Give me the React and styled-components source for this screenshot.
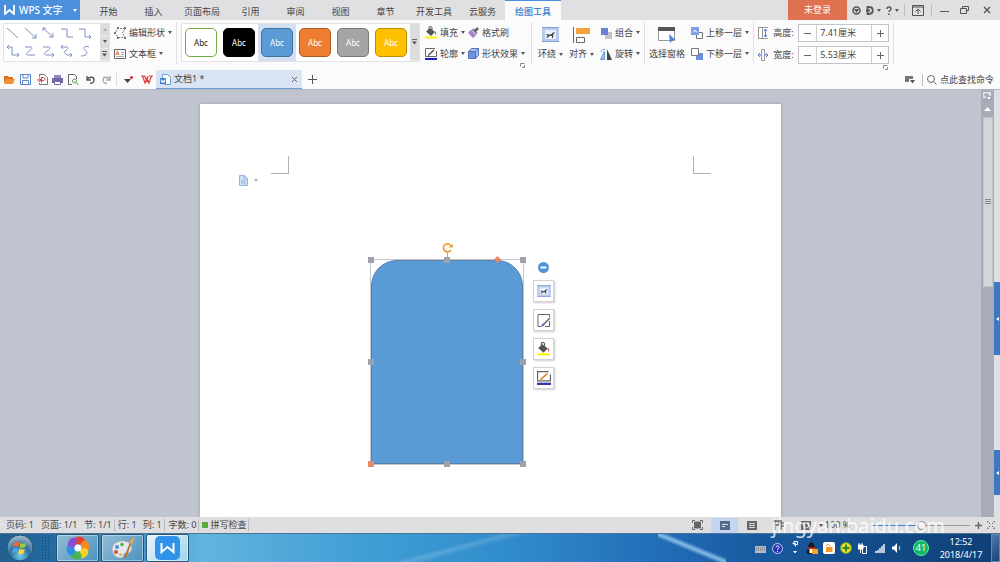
import React, { useState } from 'react'
import styled, { createGlobalStyle } from 'styled-components'

const GlobalStyle = createGlobalStyle`
  *{
    box-sizing: border-box;
  }

  body{
    margin: 0;
    overflow: hidden;
    font-family: "Noto Sans", "Noto Sans CJK SC", sans-serif;
    font-size: 9px;
    line-height: 14px;
    color: #444;
  }

  button, input{
    margin: 0;
    padding: 0;
    border: 0;
    background: none;
    font: inherit;
    color: inherit;
  }

  button{
    white-space: nowrap;
  }

  svg{
    display: block;
    flex: none;
  }
`

const Window = styled.div`
  display: flex;
  flex-direction: column;
  height: 100vh;
`

/* title bar */
const TitleBar = styled.header`
  display: flex;
  align-items: stretch;
  height: 20px;
  background: #e0e0e3;
`

const Brand = styled.button`
  display: flex;
  align-items: center;
  gap: 4px;
  width: 80px;
  padding-left: 4px;
  background: #4a90dc;
  color: #fff;
  font-size: 10px;
  font-weight: 500;
`

const BrandArrow = styled.span`
  display: flex;
  margin-left: 6px;
`

const Tabs = styled.nav`
  display: flex;
  align-items: stretch;
  padding-left: 6px;
`

const Tab = styled.button`
  min-width: ${(p) => (p.$active ? '56px' : '45px')};
  padding: 3px 8px 0;
  border-top: 1px solid ${(p) => (p.$active ? '#4a90dc' : 'transparent')};
  background: ${(p) => (p.$active ? '#fbfbfc' : 'transparent')};
  color: ${(p) => (p.$active ? '#3a80d0' : '#444')};
  font-weight: ${(p) => (p.$active ? 500 : 400)};
`

const WindowTools = styled.div`
  display: flex;
  align-items: center;
  margin-left: auto;
`

const LoginButton = styled.button`
  align-self: stretch;
  width: 59px;
  margin-right: 1px;
  background: #df7050;
  color: #fff;
`

const ToolButton = styled.button`
  display: flex;
  align-items: center;
  justify-content: center;
  width: ${(p) => p.$width || 18}px;
  height: 16px;
`

const Divider = styled.span`
  flex: none;
  width: 1px;
  height: ${(p) => p.$height || 12}px;
  margin: 0 ${(p) => p.$gap || 0}px;
  background: ${(p) => p.$color || '#bbb'};
`

/* ribbon */
const Ribbon = styled.section`
  display: flex;
  align-items: flex-start;
  height: 50px;
  padding: 2px 3px 0;
  background: #fbfbfc;
`

const Group = styled.div`
  position: relative;
  display: flex;
  gap: ${(p) => p.$gap || 0}px;
`

const Gallery = styled.div`
  display: flex;
  height: 39px;
  margin-top: 1px;
  border: 1px solid #e2e2e6;
  background: #fff;
`

const LineGrid = styled.div`
  display: grid;
  grid-template-columns: repeat(5, 18px);
  grid-template-rows: 18px 18px;
  padding-right: 6px;
`

const GalleryScroll = styled.div`
  display: flex;
  flex-direction: column;
  width: 9px;
  background: #dcdcdc;

  button{
    display: flex;
    flex: 1;
    align-items: center;
    justify-content: center;
    border-bottom: 1px solid #ececec;
  }
`

const IconButton = styled.button`
  display: flex;
  align-items: center;
  justify-content: center;
`

const SwatchCell = styled.button`
  display: flex;
  align-items: center;
  justify-content: center;
  width: 38px;
  background: ${(p) => (p.$active ? '#d5dff3' : 'transparent')};
`

const Swatch = styled.span`
  width: 32px;
  height: 29px;
  border: 1px solid ${(p) => p.$line};
  border-radius: 5px;
  background: ${(p) => p.$fill};
  color: ${(p) => p.$text || '#fff'};
  font-size: 8px;
  line-height: 27px;
`

const Column = styled.div`
  display: flex;
  flex-direction: column;
`

const Command = styled.button`
  display: flex;
  align-items: center;
  gap: 3px;
  height: 21px;
`

const BigCommand = styled.button`
  display: flex;
  flex-direction: column;
  align-items: center;
`

const BigIcon = styled.span`
  display: flex;
  align-items: center;
  justify-content: center;
  height: 25px;
`

const CommandText = styled.span`
  display: flex;
  align-items: center;
  gap: 3px;
`

const Launcher = styled.button`
  position: absolute;
  right: ${(p) => p.$right || 0}px;
  bottom: -4px;
`

const SizeRow = styled.div`
  display: flex;
  align-items: center;
  height: 22px;

  label{
    display: flex;
    align-items: center;
    gap: 5px;
    width: 40px;
  }
`

const Spinner = styled.div`
  display: grid;
  grid-template-columns: 17px 56px 16px;
  height: 18px;
  border: 1px solid #c4c4c8;
  background: #fff;

  input{
    width: 100%;
    padding-left: 3px;
    border: solid #d0d0d4;
    border-width: 0 1px;
  }
`

/* quick access bar */
const QuickBar = styled.div`
  display: flex;
  align-items: center;
  height: 20px;
  padding: 0 6px 0 1px;
  border-bottom: 1px solid #b4b7c2;
  background: #fbfbfc;
`

const DocTab = styled.div`
  display: flex;
  align-items: center;
  gap: 3px;
  width: 146px;
  height: 19px;
  padding: 0 4px;
  border-bottom: 1px solid #6c9fdb;
  background: #d8e3f3;
`

const DocName = styled.span`
  flex: 1;
`

const QuickRight = styled.div`
  display: flex;
  align-items: center;
  margin-left: auto;
`

/* document area */
const Workspace = styled.main`
  display: flex;
  flex: 1;
  min-height: 0;
  background: #c0c4cf;
`

const Canvas = styled.div`
  flex: 1;
  overflow: hidden;
  padding-top: 14px;
`

const Page = styled.div`
  position: relative;
  width: 581px;
  height: 100%;
  margin: 0 auto;
  background: #fff;
  box-shadow: 0 0 3px #9699a4;
`

const PageMark = styled.div`
  position: absolute;
  top: 52px;
  left: ${(p) => p.$left}px;
  width: 18px;
  height: 18px;
  border: solid #b4b4b4;
  border-width: ${(p) => (p.$side === 'right' ? '0 1px 1px 0' : '0 0 1px 1px')};
`

const PasteOption = styled.button`
  position: absolute;
  top: 71px;
  left: 38px;
  display: flex;
  align-items: center;
  gap: 5px;
`

const ShapeBox = styled.div`
  position: absolute;
  top: 155px;
  left: 170px;
  width: 154px;
  height: 206px;
  border: 1px solid #c6c8cc;
`

const RoundShape = styled.div`
  height: 100%;
  border: 1px solid #5580aa;
  border-radius: 26px 26px 0 0;
  background: #5b9bd5;
`

const Handle = styled.span`
  position: absolute;
  left: ${(p) => p.$x}%;
  top: ${(p) => p.$y}%;
  width: 6px;
  height: 6px;
  margin: -3px;
  background: ${(p) => p.$color || '#9ea2ac'};
`

const AdjustHandle = styled.span`
  position: absolute;
  top: -3px;
  left: 124px;
  width: 5px;
  height: 5px;
  background: #ee8460;
  transform: rotate(45deg);
`

const RotateHandle = styled.span`
  position: absolute;
  top: -18px;
  left: 70px;
`

const FloatBar = styled.div`
  position: absolute;
  top: 158px;
  left: 333px;
  display: flex;
  flex-direction: column;
  align-items: center;
  gap: 7px;
`

const FloatButton = styled.button`
  display: flex;
  align-items: center;
  justify-content: center;
  width: 21px;
  height: 22px;
  border: 1px solid #d2d2d2;
  background: #fff;
  box-shadow: 1px 1px 2px #ccc;
`

const ScrollBar = styled.div`
  display: flex;
  flex-direction: column;
  align-items: center;
  width: 13px;
  padding-top: 2px;
  background: #a9abb6;
`

const ScrollThumb = styled.div`
  display: flex;
  align-items: center;
  justify-content: center;
  width: 10px;
  height: 40%;
  border: 1px solid #c0c3c7;
  background: #d3d6d8;
`

const SideStrip = styled.aside`
  display: flex;
  flex-direction: column;
  width: 6px;
  padding-top: 192px;
  gap: 95px;
  background: #dedee3;
`

const SideTab = styled.button`
  display: flex;
  align-items: center;
  justify-content: center;
  height: ${(p) => p.$height}px;
  background: #3b79c7;
`

/* status bar */
const StatusBar = styled.footer`
  position: relative;
  display: flex;
  align-items: center;
  height: 16px;
  padding: 0 2px 0 6px;
  background: #dfdfe1;
`

const StatusItem = styled.span`
  margin-right: ${(p) => p.$gap || 2}px;
  white-space: nowrap;
`

const SpellMark = styled.span`
  width: 6px;
  height: 6px;
  margin: 0 2px 0 3px;
  background: #55ab3c;
`

const ViewTools = styled.div`
  display: flex;
  align-items: center;
  margin-left: auto;
`

const ViewButton = styled.button`
  display: flex;
  align-items: center;
  justify-content: center;
  width: 27px;
  height: 15px;
  background: ${(p) => (p.$active ? '#c3d5f0' : 'transparent')};
`

const Zoom = styled.input.attrs({ type: 'range' })`
  width: 98px;
  height: 10px;
  margin: 0 3px 0 20px;
  appearance: none;

  &::-webkit-slider-runnable-track{
    height: 1px;
    background: linear-gradient(90deg, #3f82d6 50%, #a59595 50%);
  }

  &::-webkit-slider-thumb{
    width: 9px;
    height: 9px;
    margin-top: -4px;
    appearance: none;
    border: 1px solid #888;
    border-radius: 50%;
    background: #f2f2f2;
  }
`

const Watermark = styled.div`
  position: absolute;
  top: -4px;
  right: 55px;
  z-index: 2;
  color: rgba(255, 255, 255, 0.8);
  font-size: 20px;
  line-height: 26px;
  pointer-events: none;
`

/* taskbar */
const TaskBar = styled.div`
  display: flex;
  align-items: center;
  height: 29px;
  padding-left: 6px;
  border-top: 1px solid #4a7597;
  background:
    linear-gradient(to top right, transparent 42%, rgba(160, 210, 245, 0.8) 50%, transparent 58%) 658px 0 / 68px 28px no-repeat,
    linear-gradient(165deg, transparent 46%, rgba(255, 255, 255, 0.16) 50%, transparent 56%) 330px 0 / 250px 29px no-repeat,
    linear-gradient(90deg, #235f90 0, #226aa0 5%, #62b4dd 20%, #419fd6 36%, #2f8aca 52%, #2069b3 68%, #185a9f 76%, #124b88 88%, #0f3f75 100%);
`

const StartButton = styled.button`
  width: 28px;
  height: 28px;
`

const Grip = styled.span`
  width: 8px;
  height: 24px;
  margin: 0 7px;
  background: radial-gradient(circle, #164668 0, #164668 1px, transparent 1px) 0 0 / 3px 3px;
`

const TaskButton = styled.button`
  display: flex;
  align-items: center;
  justify-content: center;
  width: 43px;
  height: 28px;
  margin-right: 2px;
  border: 1px solid #24567c;
  border-radius: 2px;
  background: ${(p) => (p.$active
    ? 'linear-gradient(135deg, #e8f5fb, #9fd3ee)'
    : 'linear-gradient(135deg, #93bcd4, #4b94bf)')};
  box-shadow: inset 0 0 0 1px rgba(255, 255, 255, 0.4);
`

const Tray = styled.div`
  display: flex;
  align-items: center;
  margin-left: auto;
  color: #fff;
`

const TrayIcon = styled.button`
  display: flex;
  align-items: center;
  justify-content: center;
  width: 17px;
  height: 18px;
`

const Battery = styled.span`
  width: 16px;
  height: 16px;
  margin: 0 10px 0 8px;
  border: 1px solid #5ff0a0;
  border-radius: 50%;
  background: #12b868;
  text-align: center;
`

const Clock = styled.time`
  width: 44px;
  line-height: 13px;
  text-align: center;
`

const ShowDesktop = styled.button`
  width: 9px;
  height: 28px;
  margin-left: 8px;
  border: 1px solid #5f88b4;
  background: linear-gradient(135deg, #4d7bac, #174474);
`

const Caret = ({ color = '#555', up }) => (
  <svg width="4" height="3" viewBox="0 0 4 3">
    <path d={up ? 'M0 3h4L2 0z' : 'M0 0h4L2 3z'} fill={color} />
  </svg>
)

const Icon = ({ w = 12, h = 12, children }) => (
  <svg width={w} height={h} viewBox={`0 0 ${w} ${h}`} fill="none" stroke="#666" strokeWidth="1">
    {children}
  </svg>
)

const LauncherIcon = () => (
  <Icon w={5} h={5}>
    <path d="M.5 3.500V.5h4M2 4.500h2.500V2" stroke="#888" />
  </Icon>
)

const linePaths = [
  'M1 1l11 10',
  'M1 1l11 10M12 7v4H8',
  'M1 1l10 9M11 6v4H7M1 4V1h3',
  'M1 2h6v8h6',
  'M1 2h6v8h6M11 8l2 2-2 2',
  'M1 2h5v8h7M11 8l2 2-2 2M3 0L1 2l2 2',
  'M1 2h5c4 0 1 3-2 5s-1 3 1 3h6',
  'M1 2h5c4 0 1 3-2 5s-1 3 1 3h7M10 8l2 2-2 2',
  'M1 2h5c4 0 1 3-1 4s1 4 3 4h4M10 8l2 2-2 2M3 0L1 2l2 2',
  'M11 2C7 0 4 3 7 5s3 6-4 6',
]

const styleItems = [
  { fill: '#fff', line: '#70ad47', text: '#222' },
  { fill: '#000', line: '#000' },
  { fill: '#5b9bd5', line: '#41719c' },
  { fill: '#ed7d31', line: '#ae5a21' },
  { fill: '#a5a5a5', line: '#787878' },
  { fill: '#ffc000', line: '#bc8c00' },
]

const tabs = ['开始', '插入', '页面布局', '引用', '审阅', '视图', '章节', '开发工具', '云服务', '绘图工具']

const BucketIcon = ({ size = 12 }) => (
  <svg width={size} height={size + 1} viewBox="0 0 12 13">
    <path d="M1 5.500L5 2l5 4-4 4z" fill="#555" />
    <path d="M4 4V1.500C4 0 7 0 7 2v2" fill="none" stroke="#555" />
    <path d="M10 5c1 1 1.800 2.300 1 4-1-.3-1.200-2-1-4z" fill="#d35d4c" />
    <path d="M0 10.500h12v2H0z" fill="#fff200" />
  </svg>
)

const OutlineIcon = ({ size = 12, pen = '#555', line = '#1a1ad0' }) => (
  <svg width={size} height={size} viewBox="0 0 12 12" fill="none" stroke="#666">
    <path d="M11.500 3v5.500H.5v-8H10" />
    <path d="M3 7.500l6-5.500" stroke={pen} strokeWidth="1.500" />
    <path d="M0 11h12" stroke={line} strokeWidth="2" />
  </svg>
)

const WrapIcon = ({ w = 17, h = 15 }) => (
  <svg width={w} height={h} viewBox="0 0 17 15">
    <path d="M0 0h17v15H0z" fill="#b5c9eb" />
    <path d="M0 .5h17M0 14.500h17" stroke="#7fa0da" />
    <path d="M3 3h11v9H3z" fill="#e9effa" />
    <path d="M4 7h1.500l.5.500h3L11.500 5l1.500 1-1.500.500L11 11h-1V9H7l-1.500 2h-1L5.500 8.500z" fill="#444" />
  </svg>
)

const BackLayers = ({ front }) => (
  <Icon w={12} h={12}>
    {front ? (
      <>
        <path d="M5.500 5.500h6v6h-6z" fill="#fff" stroke="#777" />
        <path d="M0 0h8v8H0z" fill="#7f9fe0" stroke="none" />
        <path d="M2 5.500L4 3l2 2.500" stroke="#fff" />
      </>
    ) : (
      <>
        <path d="M5 5h7v7H5z" fill="#6d90dc" stroke="none" />
        <path d="M.5.500h7v7h-7z" fill="#fff" stroke="#777" />
      </>
    )}
  </Icon>
)

function GalleryArrows({ single }) {
  return (
    <GalleryScroll>
      {!single && <button aria-label="上一行"><Caret up color="#aaa" /></button>}
      {!single && <button aria-label="下一行"><Caret /></button>}
      <button aria-label="更多">
        <Icon w={5} h={6}><path d="M0 .5h5" /><path d="M0 2.500h5l-2.500 3z" fill="#555" stroke="none" /></Icon>
      </button>
    </GalleryScroll>
  )
}

function MenuCommand({ icon, text, menu = true }) {
  return (
    <Command>
      {icon}
      <CommandText>{text}{menu && <Caret />}</CommandText>
    </Command>
  )
}

function SizeField({ id, label, icon, initial }) {
  const [value, setValue] = useState(initial)
  const step = (n) => setValue((v) => `${(parseFloat(v) + n).toFixed(2)}厘米`)

  return (
    <SizeRow>
      <label htmlFor={id}>{icon}{label}</label>
      <Spinner>
        <IconButton aria-label={`减小${label}`} onClick={() => step(-0.1)}>
          <Icon w={7} h={7}><path d="M0 3.500h7" /></Icon>
        </IconButton>
        <input id={id} value={value} onChange={(e) => setValue(e.target.value)} />
        <IconButton aria-label={`增大${label}`} onClick={() => step(0.1)}>
          <Icon w={7} h={7}><path d="M0 3.500h7M3.500 0v7" /></Icon>
        </IconButton>
      </Spinner>
    </SizeRow>
  )
}

function Header() {
  const [active, setActive] = useState('绘图工具')

  return (
    <TitleBar>
      <Brand>
        <Icon w={11} h={10}>
          <path d="M1 0v9l4.500-4L10 9V0" stroke="#fff" strokeWidth="1.800" />
        </Icon>
        WPS 文字
        <BrandArrow><Caret color="#fff" /></BrandArrow>
      </Brand>
      <Tabs>
        {tabs.map((t) => (
          <Tab key={t} $active={t === active} onClick={() => setActive(t)}>{t}</Tab>
        ))}
      </Tabs>
      <WindowTools>
        <LoginButton>未登录</LoginButton>
        <ToolButton $width={16} aria-label="皮肤">
          <Icon w={9} h={9}>
            <circle cx="4.500" cy="4.500" r="3.500" stroke="#555" strokeWidth="1.500" />
            <path d="M2 3h5L4.500 7z" fill="#555" stroke="none" />
          </Icon>
        </ToolButton>
        <ToolButton $width={19} aria-label="文档">
          <CommandText>
            <Icon w={8} h={9}>
              <path d="M1.500 1H3c5 0 5 7 0 7H1.500zM0 4.500h4" stroke="#555" strokeWidth="1.800" />
            </Icon>
            <Caret />
          </CommandText>
        </ToolButton>
        <ToolButton $width={19} aria-label="帮助">
          <CommandText>
            <Icon w={6} h={9}>
              <path d="M1 3c0-3 4-2.500 4 0 0 1.500-2 1.500-2 3M3 7.500V9" stroke="#555" strokeWidth="1.500" />
            </Icon>
            <Caret />
          </CommandText>
        </ToolButton>
        <Divider $gap={2} />
        <ToolButton $width={22} aria-label="功能区">
          <Icon w={12} h={11}>
            <path d="M.5.500h11v10H.5zM0 2h12M6 9V4.500M3.500 6.500L6 4l2.500 2.500" stroke="#555" />
          </Icon>
        </ToolButton>
        <Divider $gap={2} />
        <ToolButton $width={20} aria-label="最小化">
          <Icon w={9} h={9}><path d="M0 5.500h9" stroke="#555" /></Icon>
        </ToolButton>
        <ToolButton $width={20} aria-label="还原">
          <Icon w={9} h={8}><path d="M2.500 2V.5h6v4H7M.5 2.500h6v5h-6z" stroke="#555" /></Icon>
        </ToolButton>
        <ToolButton $width={26} aria-label="关闭">
          <Icon w={8} h={8}><path d="M1 1l6 6M7 1L1 7" stroke="#555" strokeWidth="1.400" /></Icon>
        </ToolButton>
      </WindowTools>
    </TitleBar>
  )
}

function RibbonBar() {
  const [style, setStyle] = useState(2)

  return (
    <Ribbon>
      <Group $gap={4}>
        <Gallery>
          <LineGrid>
            {linePaths.map((d) => (
              <IconButton key={d} aria-label="线条">
                <Icon w={14} h={13}><path d={d} stroke="#7f8fc4" /></Icon>
              </IconButton>
            ))}
          </LineGrid>
          <GalleryArrows />
        </Gallery>
        <Column>
          <MenuCommand
            text="编辑形状"
            icon={(
              <Icon>
                <path d="M11 1.500H4L1 6l3 4.500h7L8.500 6z" stroke="#777" strokeDasharray="2 1" />
                <path d="M10 0h2v2h-2zM10 10h2v2h-2zM3 0h2v2H3zM3 10h2v2H3zM0 5h2v2H0z" fill="#777" stroke="none" />
              </Icon>
            )}
          />
          <MenuCommand
            text="文本框"
            icon={(
              <Icon>
                <path d="M.5 1.500h11v9H.5z" />
                <path d="M2 7l1.500-4L5 7M2.500 6h2" stroke="#e0743e" />
                <path d="M7 4.500h3M7 6.500h3M2 8.500h8" stroke="#aaa" />
              </Icon>
            )}
          />
        </Column>
      </Group>

      <Divider $height={43} $gap={4} $color="#e2e2e4" />

      <Group>
        <Gallery>
          {styleItems.map((s, i) => (
            <SwatchCell key={s.fill} $active={i === style} onClick={() => setStyle(i)}>
              <Swatch $fill={s.fill} $line={s.line} $text={s.text}>Abc</Swatch>
            </SwatchCell>
          ))}
          <GalleryArrows single />
        </Gallery>
      </Group>

      <Divider $gap={2} $color="transparent" />

      <Group $gap={3}>
        <Column>
          <MenuCommand text="填充" icon={<BucketIcon />} />
          <MenuCommand text="轮廓" icon={<OutlineIcon />} />
        </Column>
        <Column>
          <MenuCommand
            text="格式刷"
            menu={false}
            icon={(
              <Icon w={11} h={11}>
                <path d="M6 3l3-3 2 2-3 3z" fill="#666" stroke="none" />
                <path d="M3 2.500L8.500 8 5 11 0 6z" fill="#a387cf" stroke="none" />
                <path d="M4.500 2L9 6.500" stroke="#666" strokeWidth="1.500" />
              </Icon>
            )}
          />
          <MenuCommand
            text="形状效果"
            icon={(
              <Icon w={11} h={11}>
                <path d="M.5 3.500h7v7h-7z" fill="#6e92dc" stroke="#5274b8" />
                <path d="M.5 3.500l3-3h7l-3 3zM7.500 10.500l3-3v-7l-3 3z" fill="#a9bfec" stroke="#5274b8" />
              </Icon>
            )}
          />
        </Column>
        <Launcher aria-label="形状设置"><LauncherIcon /></Launcher>
      </Group>

      <Divider $height={43} $gap={6} $color="#e2e2e4" />

      <Group $gap={6}>
        <BigCommand>
          <BigIcon><WrapIcon /></BigIcon>
          <CommandText>环绕<Caret /></CommandText>
        </BigCommand>
        <BigCommand>
          <BigIcon>
            <Icon w={17} h={16}>
              <path d="M.5 0v16" />
              <path d="M3 1h14v6H3z" fill="#f2a33a" stroke="none" />
              <path d="M3.500 10.500h8v5h-8z" />
            </Icon>
          </BigIcon>
          <CommandText>对齐<Caret /></CommandText>
        </BigCommand>
        <Column>
          <MenuCommand
            text="组合"
            icon={(
              <Icon>
                <path d="M5 5h7v7H5z" fill="#c3c3ca" stroke="none" />
                <path d="M1 1h7v7H1z" fill="#6483d0" stroke="none" />
              </Icon>
            )}
          />
          <MenuCommand
            text="旋转"
            icon={(
              <Icon>
                <path d="M4.500 3v8.500H.5z" fill="#9dc0ea" stroke="#6b9bd4" />
                <path d="M7 1v11h5z" fill="#444" stroke="none" />
                <path d="M1 4c0-2 2-3 4-2.500" stroke="#6b9bd4" />
              </Icon>
            )}
          />
        </Column>
      </Group>

      <Divider $height={43} $gap={4} $color="#e2e2e4" />

      <Group $gap={6}>
        <BigCommand>
          <BigIcon>
            <Icon w={18} h={16}>
              <path d="M.5.500h16v13H.5z" fill="#fff" stroke="#999" />
              <path d="M0 0h17v4H0z" fill="#555" stroke="none" />
              <path d="M11 7l6.500 6-3 .5L12 16z" fill="#5580d8" stroke="none" />
            </Icon>
          </BigIcon>
          <CommandText>选择窗格</CommandText>
        </BigCommand>
        <Column>
          <MenuCommand text="上移一层" icon={<BackLayers front />} />
          <MenuCommand text="下移一层" icon={<BackLayers />} />
        </Column>
      </Group>

      <Divider $height={43} $gap={4} $color="#e2e2e4" />

      <Group>
        <Column>
          <SizeField
            id="height"
            label="高度:"
            initial="7.41厘米"
            icon={(
              <Icon w={10} h={12}>
                <path d="M.5.500h4v11h-4zM0 .5h10M0 11.500h10" stroke="#999" />
                <path d="M7.500 2v8M6 4l1.500-2L9 4M6 8l1.500 2L9 8" stroke="#5580d8" />
              </Icon>
            )}
          />
          <SizeField
            id="width"
            label="宽度:"
            initial="5.53厘米"
            icon={(
              <Icon w={10} h={12}>
                <path d="M3.500.500h3v11h-3z" stroke="#999" />
                <path d="M0 6h3M7 6h3M2 4L0 6l2 2M8 4l2 2-2 2" stroke="#5580d8" />
              </Icon>
            )}
          />
        </Column>
        <Launcher aria-label="大小设置" $right={1}><LauncherIcon /></Launcher>
      </Group>

      <Divider $height={43} $gap={4} $color="#e2e2e4" />
    </Ribbon>
  )
}

function QuickAccess() {
  return (
    <QuickBar>
      <ToolButton $width={16} aria-label="打开">
        <Icon w={11} h={9}>
          <path d="M0 8V1h4l1 1h4v2H3z" fill="#d9701c" stroke="none" />
          <path d="M2.500 4H11L9 9H0z" fill="#f2903a" stroke="none" />
        </Icon>
      </ToolButton>
      <ToolButton $width={17} aria-label="保存">
        <Icon w={11} h={11}>
          <path d="M.5.500h10v10H.5z" stroke="#5b86cf" />
          <path d="M3 1v3h5V1M2.500 10V6.500h6V10" stroke="#5b86cf" />
        </Icon>
      </ToolButton>
      <ToolButton $width={16} aria-label="输出为PDF">
        <Icon w={11} h={11}>
          <path d="M2.500 3V.5h5l3 3v7h-8V9" stroke="#777" />
          <path d="M4.500 9V3.500h2c2 0 2 3 0 3h-2M0 6h3M2 4l2 2-2 2" stroke="#cc4444" />
        </Icon>
      </ToolButton>
      <ToolButton $width={15} aria-label="打印">
        <Icon w={11} h={10}>
          <path d="M2 0h7v3H2z" fill="#8c88bd" stroke="none" />
          <path d="M0 3h11v5H0z" fill="#6d69a8" stroke="none" />
          <path d="M2.500 6.500h6v3h-6z" fill="#fff" stroke="#6d69a8" />
        </Icon>
      </ToolButton>
      <ToolButton $width={17} aria-label="打印预览">
        <Icon w={11} h={11}>
          <path d="M4 10.500H.5V.5h6l2 2V5" />
          <circle cx="6.500" cy="7" r="2" stroke="#55a050" />
          <path d="M8 8.500l2.500 2.500" stroke="#55a050" />
        </Icon>
      </ToolButton>
      <ToolButton $width={16} aria-label="撤销">
        <Icon w={9} h={8}><path d="M1 3.500C4 0 8 1 8 4c0 2-2 3.500-4 3.500M1 0v4h4" stroke="#555" strokeWidth="1.400" /></Icon>
      </ToolButton>
      <ToolButton $width={16} aria-label="恢复">
        <Icon w={9} h={8}><path d="M8 3.500C5 0 1 1 1 4c0 2 2 3.500 4 3.500M8 0v4H4" stroke="#aaa" strokeWidth="1.400" /></Icon>
      </ToolButton>
      <Divider $gap={2} $height={13} $color="#ddd" />
      <ToolButton $width={18} aria-label="自定义">
        <Icon w={9} h={8}>
          <path d="M0 3h7L3.500 7z" fill="#444" stroke="none" />
          <circle cx="7.500" cy="1.500" r="1.500" fill="#e02020" stroke="none" />
        </Icon>
      </ToolButton>
      <ToolButton $width={19} aria-label="WPS 首页">
        <Icon w={12} h={9}>
          <path d="M0 1h4M8 1h4M1.500 1l2.500 7 2-4.500L8 8l2.500-7M3.500 1L6 6l1-5" stroke="#e03c3c" strokeWidth="1.200" />
        </Icon>
      </ToolButton>
      <DocTab>
        <Icon w={11} h={11}>
          <path d="M2.500 4V.5h5l3 3v7h-6" fill="#fff" stroke="#6b9bd8" />
          <path d="M0 4h6v6H0z" fill="#3f80cf" stroke="none" />
          <path d="M1 5.500l1 3 1-2 1 2 1-3" stroke="#fff" />
        </Icon>
        <DocName>文档1 *</DocName>
        <IconButton aria-label="关闭文档">
          <Icon w={7} h={7}><path d="M1 1l5 5M6 1L1 6" /></Icon>
        </IconButton>
      </DocTab>
      <ToolButton $width={20} aria-label="新建">
        <Icon w={9} h={9}><path d="M0 4.500h9M4.500 0v9" stroke="#555" /></Icon>
      </ToolButton>
      <QuickRight>
        <ToolButton aria-label="窗口">
          <Icon w={10} h={8}>
            <path d="M0 0h8v3H4v3H0z" fill="#777" stroke="none" />
            <path d="M5 4h5L7.500 7.500z" fill="#555" stroke="none" />
          </Icon>
        </ToolButton>
        <Divider $gap={3} />
        <Command>
          <Icon w={11} h={10}>
            <circle cx="5" cy="4" r="3.500" />
            <path d="M7.500 6.500L10.500 9.500" />
          </Icon>
          点此查找命令
        </Command>
      </QuickRight>
    </QuickBar>
  )
}

function DocumentArea() {
  return (
    <Workspace>
      <Canvas>
        <Page>
          <PageMark $left={71} $side="right" />
          <PageMark $left={493} />
          <PasteOption aria-label="粘贴选项">
            <Icon w={11} h={11}>
              <path d="M1.500.500h5l3 3v7h-8z" fill="#cfe0f5" stroke="#94b4dc" />
              <path d="M6 1v3h3M3 6h5M3 8h5" stroke="#94b4dc" />
            </Icon>
            <Caret color="#aaa" />
          </PasteOption>
          <ShapeBox>
            <RoundShape />
            <RotateHandle>
              <Icon w={13} h={17}>
                <path d="M6.500 10v7" stroke="#e8a33d" />
                <path d="M9.800 8A4 4 0 1 1 10 4" stroke="#e8a33d" strokeWidth="1.800" />
                <path d="M7.500 5.500H12V2z" fill="#e8a33d" stroke="none" />
              </Icon>
            </RotateHandle>
            <Handle $x={0} $y={0} />
            <Handle $x={50} $y={0} />
            <Handle $x={100} $y={0} />
            <Handle $x={0} $y={50} />
            <Handle $x={100} $y={50} />
            <Handle $x={0} $y={100} $color="#e0906c" />
            <Handle $x={50} $y={100} />
            <Handle $x={100} $y={100} />
            <AdjustHandle />
          </ShapeBox>
          <FloatBar>
            <IconButton aria-label="收起">
              <Icon w={11} h={11}>
                <circle cx="5.500" cy="5.500" r="5.500" fill="#5293d9" stroke="none" />
                <path d="M2.500 5.500h6" stroke="#fff" strokeWidth="2" />
              </Icon>
            </IconButton>
            <FloatButton aria-label="环绕"><WrapIcon w={14} h={12} /></FloatButton>
            <FloatButton aria-label="形状样式">
              <Icon w={14} h={13}>
                <path d="M12.500 7v5.500H8M4 12.500H1V.500h11.500V3" />
                <path d="M13 4L7 10" strokeWidth="1.500" />
                <path d="M7 9l-3 3 3-.5z" fill="#6b6be0" stroke="#6b6be0" />
              </Icon>
            </FloatButton>
            <FloatButton aria-label="填充"><BucketIcon size={13} /></FloatButton>
            <FloatButton aria-label="轮廓"><OutlineIcon size={14} pen="#e89040" line="#3535a8" /></FloatButton>
          </FloatBar>
        </Page>
      </Canvas>
      <ScrollBar>
        <Icon w={9} h={9}>
          <path d="M0 0h8v6H0z" fill="#e2e5ee" stroke="none" />
          <path d="M2 2h3v2H2z" stroke="#8a8fa0" />
          <circle cx="6" cy="6" r="2" fill="#fff" stroke="#8a8fa0" />
        </Icon>
        <ToolButton $width={10} aria-label="向上滚动">
          <Icon w={7} h={4}><path d="M0 4h7L3.500 0z" fill="#fff" stroke="none" /></Icon>
        </ToolButton>
        <ScrollThumb>
          <Icon w={6} h={6}><path d="M0 .5h6M0 2.500h6M0 4.500h6" stroke="#888" /></Icon>
        </ScrollThumb>
      </ScrollBar>
      <SideStrip>
        <SideTab $height={73} aria-label="展开任务窗格"><Icon w={3} h={4}><path d="M3 0v4L0 2z" fill="#fff" stroke="none" /></Icon></SideTab>
        <SideTab $height={45} aria-label="展开侧栏"><Icon w={3} h={4}><path d="M3 0v4L0 2z" fill="#fff" stroke="none" /></Icon></SideTab>
      </SideStrip>
    </Workspace>
  )
}

function Status() {
  const [zoom, setZoom] = useState(50)

  return (
    <StatusBar>
      <StatusItem $gap={7}>页码: 1</StatusItem>
      <StatusItem $gap={7}>页面: 1/1</StatusItem>
      <StatusItem>节: 1/1</StatusItem>
      <Divider />
      <StatusItem $gap={3} />
      <StatusItem $gap={6}>行: 1</StatusItem>
      <StatusItem>列: 1</StatusItem>
      <Divider />
      <StatusItem $gap={4} />
      <StatusItem>字数: 0</StatusItem>
      <Divider />
      <SpellMark />
      <StatusItem>拼写检查</StatusItem>
      <Divider />
      <ViewTools>
        <ViewButton aria-label="全屏显示">
          <Icon w={11} h={10}>
            <path d="M2.500 2h6v6h-6z" fill="#666" />
            <path d="M.5 3V.5H3M8 .5h2.500V3M.5 7v2.500H3M8 9.500h2.500V7" />
          </Icon>
        </ViewButton>
        <ViewButton $active aria-label="页面视图">
          <Icon w={10} h={9}><path d="M0 0h10v9H0z" fill="#596a85" stroke="none" /><path d="M2 3.500h6M2 5.500h3" stroke="#d5e2f5" /></Icon>
        </ViewButton>
        <ViewButton aria-label="大纲">
          <Icon w={10} h={9}><path d="M0 0h10v9H0z" fill="#666" stroke="none" /><path d="M2 2.500h6M2 4.500h6M2 6.500h6" stroke="#ddd" /></Icon>
        </ViewButton>
        <ViewButton aria-label="阅读版式">
          <Icon w={10} h={10}><path d="M1 0v10M1 1h4v4H1M7 0v10M7 3h3M7 6h3" strokeWidth="1.500" /></Icon>
        </ViewButton>
        <ViewButton aria-label="Web版式">
          <Icon w={10} h={9}><path d="M0 0h10v9H0z" fill="#666" stroke="none" /><circle cx="5" cy="4.500" r="2.500" stroke="#ddd" /></Icon>
        </ViewButton>
        <Caret />
        <ToolButton $width={29}>100 %</ToolButton>
        <Zoom aria-label="缩放" value={zoom} onChange={(e) => setZoom(e.target.value)} />
        <ToolButton $width={11} aria-label="放大">
          <Icon w={7} h={7}><path d="M0 3.500h7M3.500 0v7" strokeWidth="1.400" /></Icon>
        </ToolButton>
        <ToolButton $width={14} aria-label="适合窗口">
          <Icon w={8} h={8}><path d="M0 2V0h2M6 0h2v2M8 6v2H6M2 8H0V6M2 2l1 1M6 2L5 3M2 6l1-1M6 6L5 5" /></Icon>
        </ToolButton>
      </ViewTools>
      <Watermark>jingyan.baidu.com</Watermark>
    </StatusBar>
  )
}

function Taskbar() {
  const petals = ['#e8402c', '#f58a1f', '#f5d51f', '#46b648', '#2f8fe0', '#8a4fd0']

  return (
    <TaskBar>
      <StartButton aria-label="开始">
        <svg width="28" height="28" viewBox="0 0 28 28">
          <defs>
            <radialGradient id="orb" cx="50%" cy="80%" r="75%">
              <stop offset="0" stopColor="#6cd0f0" />
              <stop offset="0.5" stopColor="#2d6d9c" />
              <stop offset="1" stopColor="#9db9cb" />
            </radialGradient>
          </defs>
          <circle cx="14" cy="14" r="13" fill="url(#orb)" stroke="#244f70" />
          <path d="M8 9c2-1.500 4-1.500 5.500-.5L12.500 13c-2-1-4-.8-5.500.3z" fill="#ee6a34" />
          <path d="M14.500 9c2 1 4 1 6-.3L19 13.300c-2 1-4 1-5.500.2z" fill="#9ccc3c" />
          <path d="M6.800 14.500c2-1.200 3.800-1.200 5.500-.3L11 19c-2-1-3.800-.8-5.300.2z" fill="#4ba3e3" />
          <path d="M13.300 14.800c2 1 3.800 1 5.600 0L17.500 19.500c-2 1-3.800 1-5.400 0z" fill="#fbd13c" />
        </svg>
      </StartButton>
      <Grip />
      <TaskButton aria-label="图片浏览">
        <svg width="24" height="24" viewBox="-12 -12 24 24">
          {petals.map((c, i) => (
            <path key={c} d="M0-3C-5-6-5-11 1-11.500 6-11.500 8-8 7-5z" fill={c} transform={`rotate(${i * 60})`} />
          ))}
          <circle r="3.500" fill="#fff" />
        </svg>
      </TaskButton>
      <TaskButton aria-label="画图">
        <svg width="26" height="24" viewBox="0 0 26 24">
          <path d="M2 13C2 7 9 4 15 5s8 6 6 10-6 1-7 3 0 4-4 4-8-4-8-9z" fill="#e4e9ee" stroke="#9aa9b5" />
          <circle cx="7" cy="11" r="2" fill="#4a90dc" />
          <circle cx="12" cy="8.500" r="1.800" fill="#55b04a" />
          <circle cx="6" cy="16" r="2" fill="#e0503c" />
          <circle cx="10.500" cy="18.500" r="1.600" fill="#f0b030" />
          <path d="M15 22l6-16" stroke="#b9772c" strokeWidth="2" />
          <path d="M19.500 7c0-3 2-5 5-6-.5 3-1 6-3 7z" fill="#e3a557" />
        </svg>
      </TaskButton>
      <TaskButton $active aria-label="WPS 文字">
        <svg width="25" height="24" viewBox="0 0 25 24">
          <rect width="25" height="24" rx="5" fill="#2f93ea" />
          <path d="M6.500 7v9l6-5 6 5V7" fill="none" stroke="#fff" strokeWidth="2" />
        </svg>
      </TaskButton>
      <Tray>
        <TrayIcon aria-label="输入法">
          <Icon w={11} h={9}><path d="M0 2h11v7H0z" fill="#b8bcc2" stroke="none" /><path d="M1 4h9M1 6h9M5 2V0" stroke="#666" strokeDasharray="1 1" /></Icon>
        </TrayIcon>
        <TrayIcon aria-label="帮助">
          <Icon w={11} h={11}>
            <circle cx="5.500" cy="5.500" r="5" fill="#2634b4" stroke="#c8cdf5" />
            <path d="M4 4.500c0-2.500 3.500-2 3 0 0 1-1.500 1-1.500 2.500M5.500 8v1" stroke="#fff" />
          </Icon>
        </TrayIcon>
        <TrayIcon aria-label="显示隐藏的图标">
          <Icon w={6} h={14}>
            <path d="M2 .5h3.500v3H2zM.5 2.500h3v3" stroke="#fff" />
            <path d="M1 10h4l-2 2.500z" fill="#fff" stroke="none" />
          </Icon>
        </TrayIcon>
        <TrayIcon aria-label="QQ">
          <Icon w={12} h={12}>
            <path d="M2 7c0-9 7-9 7 0l1 3-2 2H2L0 10z" fill="#1c1c1c" stroke="none" />
            <path d="M3.500 6.500h4V11h-4z" fill="#fff" stroke="none" />
            <path d="M2 5.500h7v1.500H2z" fill="#d92a2a" stroke="none" />
            <path d="M6 7h6v5H6z" fill="#f2a52c" stroke="none" />
          </Icon>
        </TrayIcon>
        <TrayIcon aria-label="应用">
          <Icon w={12} h={12}>
            <rect width="12" height="12" rx="2" fill="#fff" stroke="none" />
            <path d="M3 5h6.500v5H3z" fill="#f29a2c" stroke="none" />
            <path d="M3 4l2-2 2 2" stroke="#f29a2c" />
          </Icon>
        </TrayIcon>
        <TrayIcon aria-label="安全卫士">
          <Icon w={12} h={12}>
            <circle cx="6" cy="6" r="5.500" fill="#f5dc24" stroke="#42a135" />
            <path d="M6 2.500v7M2.500 6h7" stroke="#288a2c" strokeWidth="2" />
          </Icon>
        </TrayIcon>
        <TrayIcon aria-label="电源">
          <Icon w={9} h={11}>
            <path d="M4.500 3.500h4v7h-4z" stroke="#fff" />
            <path d="M0 2h5v4H0zM1 0v2M4 0v2M2.500 6v4" fill="#fff" stroke="#fff" />
          </Icon>
        </TrayIcon>
        <TrayIcon aria-label="网络">
          <Icon w={10} h={9}><path d="M1 9V7M3 9V6M5 9V4M7 9V2M9 9V0" stroke="#fff" strokeWidth="1.400" /></Icon>
        </TrayIcon>
        <TrayIcon aria-label="音量">
          <Icon w={9} h={10}>
            <path d="M0 3.500h2L5 0v10L2 6.500H0z" fill="#fff" stroke="none" />
            <path d="M7 3c1 1 1 3 0 4" stroke="#cde" />
          </Icon>
        </TrayIcon>
        <Battery>41</Battery>
        <Clock>12:52<br />2018/4/17</Clock>
        <ShowDesktop aria-label="显示桌面" />
      </Tray>
    </TaskBar>
  )
}

function App() {
  return (
    <Window>
      <GlobalStyle />
      <Header />
      <RibbonBar />
      <QuickAccess />
      <DocumentArea />
      <Status />
      <Taskbar />
    </Window>
  )
}

export default App
